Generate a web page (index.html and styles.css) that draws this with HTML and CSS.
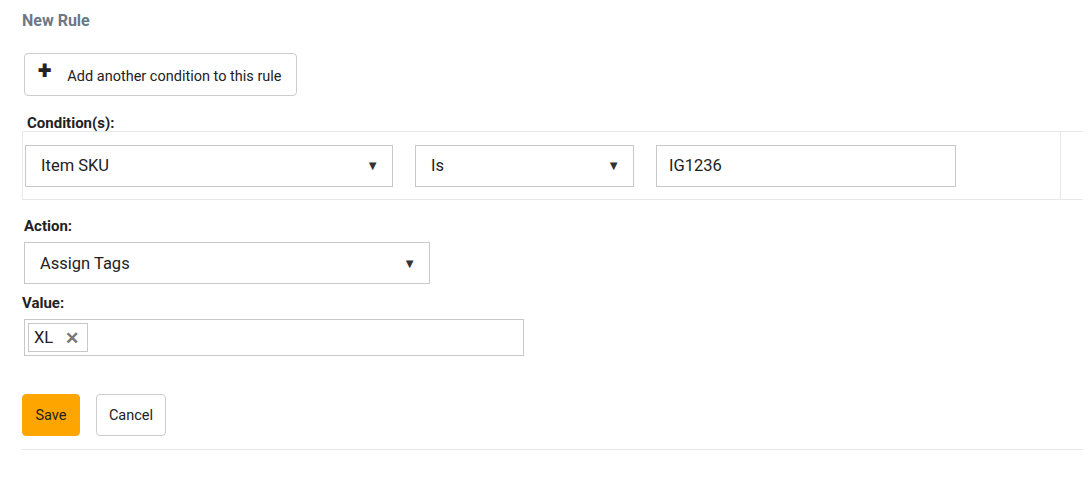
FILE: index.html
```html
<!DOCTYPE html>
<html lang="en">
<head>
  <meta charset="UTF-8">
  <title>New Rule</title>
  <link rel="stylesheet" href="styles.css">
</head>
<body>
  <main class="rule">
    <h1 class="rule-title">New Rule</h1>

    <button class="btn add-btn"><span class="plus">+</span>Add another condition to this rule</button>

    <div class="label cond-label">Condition(s):</div>
    <div class="cond-row">
      <div class="cond-fields">
        <div class="select sel-field"><span>Item SKU</span><span class="arrow">&#9660;</span></div>
        <div class="select sel-op"><span>Is</span><span class="arrow">&#9660;</span></div>
        <div class="input sel-value">IG1236</div>
      </div>
      <div class="cond-end"></div>
    </div>

    <div class="label action-label">Action:</div>
    <div class="select sel-action"><span>Assign Tags</span><span class="arrow">&#9660;</span></div>

    <div class="label value-label">Value:</div>
    <div class="tags">
      <span class="tag">XL <span class="tag-x">&#10005;</span></span>
    </div>

    <div class="actions">
      <button class="btn save-btn">Save</button>
      <button class="btn cancel-btn">Cancel</button>
    </div>
    <hr class="divider">
  </main>
</body>
</html>
```

FILE: styles.css
```css
body {
  margin: 0;
  font-family: Roboto, "Liberation Sans", sans-serif;
  color: #222;
  background: #fff;
}

.rule {
  padding: 12px 8px 0 22px;
}

.rule-title {
  margin: 0;
  font-size: 16px;
  font-weight: 700;
  color: #6b7886;
  line-height: 18px;
}

.btn {
  font-family: inherit;
  background: #fff;
  border: 1px solid #ccc;
  border-radius: 4px;
  color: #222;
  cursor: pointer;
}

.add-btn {
  display: flex;
  align-items: center;
  margin: 23px 0 0 2px;
  width: 273px;
  height: 43px;
  padding: 3px 0 0 13px;
  font-size: 14.5px;
}

.plus {
  font-size: 25px;
  font-weight: 900;
  line-height: 1;
  margin: -12px 16px 0 0;
}

.label {
  font-size: 15px;
  font-weight: 700;
  line-height: 16px;
}

.cond-label {
  margin: 19px 0 0 5px;
}

.cond-row {
  display: flex;
  border: 1px solid #e8e8e8;
  border-right: none;
  height: 67px;
}

.cond-fields {
  flex: 1;
  display: flex;
  align-items: center;
  gap: 22px;
  padding-left: 2px;
}

.cond-end {
  width: 22px;
  border-left: 1px solid #e8e8e8;
}

.select, .input {
  box-sizing: border-box;
  display: flex;
  align-items: center;
  justify-content: space-between;
  height: 42px;
  border: 1px solid #c8c8c8;
  font-size: 16.5px;
  padding: 0 13px 0 15px;
  background: #fff;
}

.arrow {
  font-size: 13px;
  color: #333;
}

.sel-field { width: 368px; }
.sel-op { width: 219px; }
.sel-value { width: 300px; padding-left: 12px; justify-content: flex-start; }

.action-label {
  margin: 18px 0 0 2px;
}

.sel-action {
  width: 406px;
  margin: 8px 0 0 2px;
}

.value-label {
  margin: 11px 0 0 0;
}

.tags {
  box-sizing: border-box;
  width: 500px;
  height: 37px;
  margin: 8px 0 0 2px;
  border: 1px solid #c8c8c8;
  padding: 3px;
  display: flex;
}

.tag {
  display: flex;
  align-items: center;
  border: 1px solid #c8c8c8;
  padding: 0 8px 0 5px;
  font-size: 16.5px;
}

.tag-x {
  color: #777;
  font-size: 17px;
  font-weight: 700;
  margin-left: 12px;
}

.actions {
  display: flex;
  gap: 16px;
  margin-top: 38px;
}

.save-btn {
  background: #ffa500;
  border-color: #ffa500;
  width: 58px;
  height: 42px;
  font-size: 14.5px;
}

.cancel-btn {
  width: 70px;
  height: 42px;
  font-size: 14.5px;
}

.divider {
  border: none;
  border-top: 1px solid #e6e6e6;
  margin: 13px 0 0 0;
}
```
